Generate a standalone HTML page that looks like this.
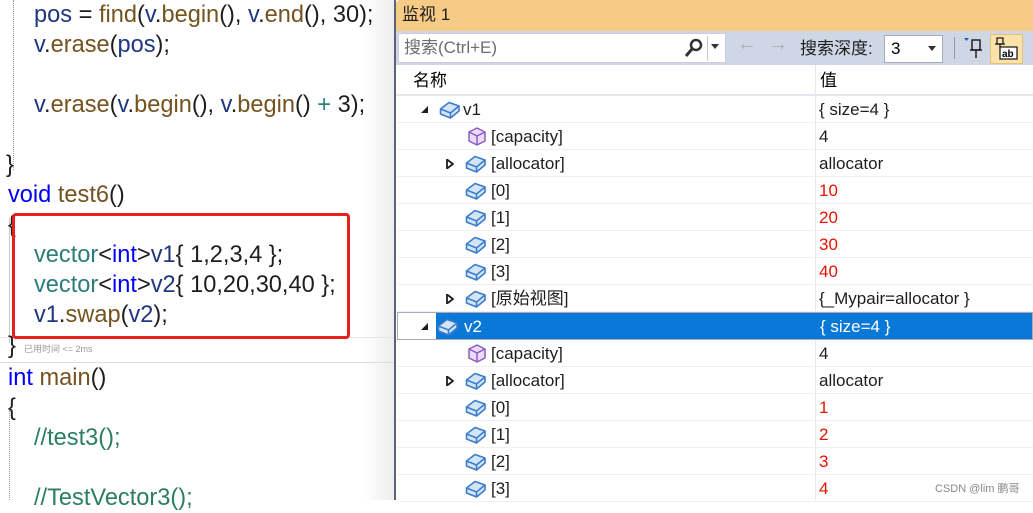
<!DOCTYPE html>
<html><head><meta charset="utf-8"><style>
*{margin:0;padding:0;box-sizing:border-box}
body{width:1033px;height:500px;overflow:hidden;background:#fff;position:relative;font-family:"Liberation Sans","Noto Sans CJK SC",sans-serif}
.c{position:absolute;font-size:23.6px;white-space:nowrap;line-height:30px;color:#1e1e1e}
.k{color:#0000ff}.f{color:#74531f}.v{color:#1f377f}.t{color:#2b7e78}
.r{position:absolute;left:397px;width:636px;height:27px;font-size:17px;line-height:27px;white-space:nowrap;color:#1e1e1e;border-bottom:1px solid #f0f0f0}
.r span{position:absolute}
.n{left:94px}.val{left:422px}.ic{position:absolute;top:3px}
.red{color:#e51400}
.ex{position:absolute;top:9px}
</style></head><body>
<div style="position:absolute;left:0;top:0;width:396px;height:500px;background:linear-gradient(to right,#fff 92%,#ececec)"></div>
<div style="position:absolute;left:13px;top:0;height:170px;border-left:1px dotted #999"></div>
<div style="position:absolute;left:9px;top:218px;height:125px;border-left:1px solid #ccc"></div>
<div style="position:absolute;left:9px;top:410px;height:90px;border-left:1px dotted #999"></div>
<div style="position:absolute;left:0;top:362px;width:394px;border-top:1px solid #ddd"></div>
<div style="position:absolute;left:0;top:337px;width:394px;border-top:1px solid #e6e6e6"></div>
<div class="c" style="left:34px;top:0"><span class="v">pos</span> = <span class="f">find</span>(<span class="v">v</span>.<span class="f">begin</span>(), <span class="v">v</span>.<span class="f">end</span>(), 30);</div>
<div class="c" style="left:34px;top:30px"><span class="v">v</span>.<span class="f">erase</span>(<span class="v">pos</span>);</div>
<div class="c" style="left:34px;top:90px"><span class="v">v</span>.<span class="f">erase</span>(<span class="v">v</span>.<span class="f">begin</span>(), <span class="v">v</span>.<span class="f">begin</span>() <span class="t">+</span> 3);</div>
<div class="c" style="left:6px;top:150px">}</div>
<div class="c" style="left:8px;top:180px"><span class="k">void</span> <span class="f">test6</span>()</div>
<div class="c" style="left:8px;top:210px">{</div>
<div class="c" style="left:34px;top:240px"><span class="t">vector</span>&lt;<span class="k">int</span>&gt;<span class="v">v1</span>{ 1,2,3,4 };</div>
<div class="c" style="left:34px;top:270px"><span class="t">vector</span>&lt;<span class="k">int</span>&gt;<span class="v">v2</span>{ 10,20,30,40 };</div>
<div class="c" style="left:34px;top:300px"><span class="v">v1</span>.<span class="f">swap</span>(<span class="v">v2</span>);</div>
<div class="c" style="left:8px;top:331px">}</div>
<div style="position:absolute;left:24px;top:342px;font-size:9px;color:#999">已用时间 &lt;= 2ms</div>
<div style="position:absolute;left:12px;top:213px;width:338px;height:126px;border:3px solid #e8201c;border-radius:4px"></div>
<div class="c" style="left:8px;top:363px"><span class="k">int</span> <span class="f">main</span>()</div>
<div class="c" style="left:8px;top:393px">{</div>
<div class="c" style="left:34px;top:423px;color:#2b7e60">//test3();</div>
<div class="c" style="left:34px;top:483px;color:#2b7e60">//TestVector3();</div>
<div style="position:absolute;left:394px;top:0;width:639px;height:500px;background:#fff;border-left:2px solid #5a6478"></div>
<div style="position:absolute;left:396px;top:0;width:637px;height:31px;background:#f5cb85;font-size:17px;line-height:30px;padding-left:6px;color:#1e1e1e;border-top-left-radius:4px">监视 1</div>
<div style="position:absolute;left:396px;top:31px;width:637px;height:34px;background:#cfd6e5"></div>
<div style="position:absolute;left:398px;top:33px;width:328px;height:30px;background:#fff;border:1px solid #ccd;font-size:17px;line-height:28px;padding-left:5px;color:#6d6d6d">搜索(Ctrl+E)</div>
<svg style="position:absolute;left:684px;top:37px" width="20" height="22"><circle cx="12" cy="8" r="5" fill="none" stroke="#333" stroke-width="2.5"/><line x1="8" y1="12" x2="2" y2="19" stroke="#333" stroke-width="3"/></svg>
<div style="position:absolute;left:707px;top:36px;width:1px;height:25px;background:#ccc"></div>
<div style="position:absolute;left:711px;top:44px;border:4px solid transparent;border-top:5px solid #333"></div>
<div style="position:absolute;left:737px;top:33px;font-size:20px;color:#a7adb8">←&nbsp;&nbsp;→</div>
<div style="position:absolute;left:800px;top:36px;font-size:17px;line-height:26px;color:#1e1e1e">搜索深度:</div>
<div style="position:absolute;left:884px;top:35px;width:59px;height:28px;background:#fff;border:1px solid #aab;font-size:17px;line-height:26px;padding-left:6px">3</div>
<div style="position:absolute;left:928px;top:46px;border:4px solid transparent;border-top:5px solid #333"></div>
<div style="position:absolute;left:954px;top:37px;width:1px;height:22px;background:#99a"></div>
<svg style="position:absolute;left:962px;top:36px" width="24" height="26"><path d="M2 2h5l-2.5 3z" fill="#1c5fb0"/><rect x="10" y="4" width="8" height="10" fill="none" stroke="#222" stroke-width="1.5"/><line x1="8" y1="14" x2="20" y2="14" stroke="#222" stroke-width="1.5"/><line x1="14" y1="14" x2="14" y2="22" stroke="#222" stroke-width="1.5"/></svg>
<div style="position:absolute;left:990px;top:34px;width:33px;height:30px;background:#fbe2a8;border:1px solid #e5c275"></div>
<svg style="position:absolute;left:994px;top:37px" width="26" height="24"><rect x="3" y="1" width="6" height="6" fill="none" stroke="#222" stroke-width="1.3"/><line x1="1" y1="7" x2="11" y2="7" stroke="#222" stroke-width="1.3"/><line x1="6" y1="7" x2="6" y2="12" stroke="#222" stroke-width="1.3"/><rect x="6" y="10" width="17" height="12" fill="#fff" stroke="#222" stroke-width="1.3"/><text x="8" y="20" font-size="10" font-family="Liberation Sans" font-weight="bold">ab</text></svg>
<div style="position:absolute;left:396px;top:65px;width:637px;height:31px;background:#fff;border-bottom:2px solid #e6e7ed;font-size:17px;line-height:31px"><span style="position:absolute;left:17px">名称</span><span style="position:absolute;left:424px">值</span></div>
<div style="position:absolute;left:815px;top:65px;height:435px;border-left:1px solid #e6e7ed"></div>
<svg width="0" height="0" style="position:absolute"><defs>
<g id="b"><path d="M1.5 10 L10 3.5 L20 7 L20 12 L11.5 19 L1.5 15 Z" fill="#d3e5f7" stroke="#3b7ccc" stroke-width="1.6" stroke-linejoin="round"/><path d="M1.5 10 L11.5 14 L20 7 M11.5 14 L11.5 19" fill="none" stroke="#3b7ccc" stroke-width="1.6"/></g>
<g id="p"><path d="M10 2 L18 6 L18 15 L10 19 L2 15 L2 6 Z" fill="#eadcf5" stroke="#8c5ac8" stroke-width="1.5" stroke-linejoin="round"/><path d="M2 6 L10 10 L18 6 M10 10 L10 19" fill="none" stroke="#8c5ac8" stroke-width="1.5"/></g>
<g id="e"><path d="M2 0.5 L8 5 L2 9.5 Z" fill="none" stroke="#1e1e1e" stroke-width="1.8" stroke-linejoin="round"/></g>
<g id="o"><path d="M8 1 L8 8 L1 8 Z" fill="#1e1e1e"/></g>
</defs></svg>
<div class="r" style="top:96px"><svg class="ex" style="left:23px" width="10" height="10"><use href="#o"/></svg><svg class="ic" style="left:42px" width="22" height="21"><use href="#b"/></svg><span style="left:66px">v1</span><span class="val">{ size=4 }</span></div>
<div class="r" style="top:123px"><svg class="ic" style="left:70px" width="22" height="21"><use href="#p"/></svg><span class="n">[capacity]</span><span class="val">4</span></div>
<div class="r" style="top:150px"><svg class="ex" style="left:48px" width="10" height="10"><use href="#e"/></svg><svg class="ic" style="left:68px" width="22" height="21"><use href="#b"/></svg><span class="n">[allocator]</span><span class="val">allocator</span></div>
<div class="r" style="top:177px"><svg class="ic" style="left:68px" width="22" height="21"><use href="#b"/></svg><span class="n">[0]</span><span class="val red">10</span></div>
<div class="r" style="top:204px"><svg class="ic" style="left:68px" width="22" height="21"><use href="#b"/></svg><span class="n">[1]</span><span class="val red">20</span></div>
<div class="r" style="top:231px"><svg class="ic" style="left:68px" width="22" height="21"><use href="#b"/></svg><span class="n">[2]</span><span class="val red">30</span></div>
<div class="r" style="top:258px"><svg class="ic" style="left:68px" width="22" height="21"><use href="#b"/></svg><span class="n">[3]</span><span class="val red">40</span></div>
<div class="r" style="top:285px"><svg class="ex" style="left:48px" width="10" height="10"><use href="#e"/></svg><svg class="ic" style="left:68px" width="22" height="21"><use href="#b"/></svg><span class="n">[原始视图]</span><span class="val">{_Mypair=allocator }</span></div>
<div class="r" style="top:312px;border:1px solid #aab;height:28px"><div style="position:absolute;left:38px;top:0;right:0;height:26px;background:#0a78d7"></div><svg class="ex" style="left:22px" width="10" height="10"><use href="#o"/></svg><svg class="ic" style="left:39px" width="22" height="21"><use href="#b"/></svg><span style="left:66px;color:#fff">v2</span><span class="val" style="color:#fff">{ size=4 }</span></div>
<div class="r" style="top:340px"><svg class="ic" style="left:70px" width="22" height="21"><use href="#p"/></svg><span class="n">[capacity]</span><span class="val">4</span></div>
<div class="r" style="top:367px"><svg class="ex" style="left:48px" width="10" height="10"><use href="#e"/></svg><svg class="ic" style="left:68px" width="22" height="21"><use href="#b"/></svg><span class="n">[allocator]</span><span class="val">allocator</span></div>
<div class="r" style="top:394px"><svg class="ic" style="left:68px" width="22" height="21"><use href="#b"/></svg><span class="n">[0]</span><span class="val red">1</span></div>
<div class="r" style="top:421px"><svg class="ic" style="left:68px" width="22" height="21"><use href="#b"/></svg><span class="n">[1]</span><span class="val red">2</span></div>
<div class="r" style="top:448px"><svg class="ic" style="left:68px" width="22" height="21"><use href="#b"/></svg><span class="n">[2]</span><span class="val red">3</span></div>
<div class="r" style="top:475px"><svg class="ic" style="left:68px" width="22" height="21"><use href="#b"/></svg><span class="n">[3]</span><span class="val red">4</span></div>
<div style="position:absolute;left:935px;top:480px;font-size:11px;color:#888">CSDN @lim 鹏哥</div>
</body></html>
